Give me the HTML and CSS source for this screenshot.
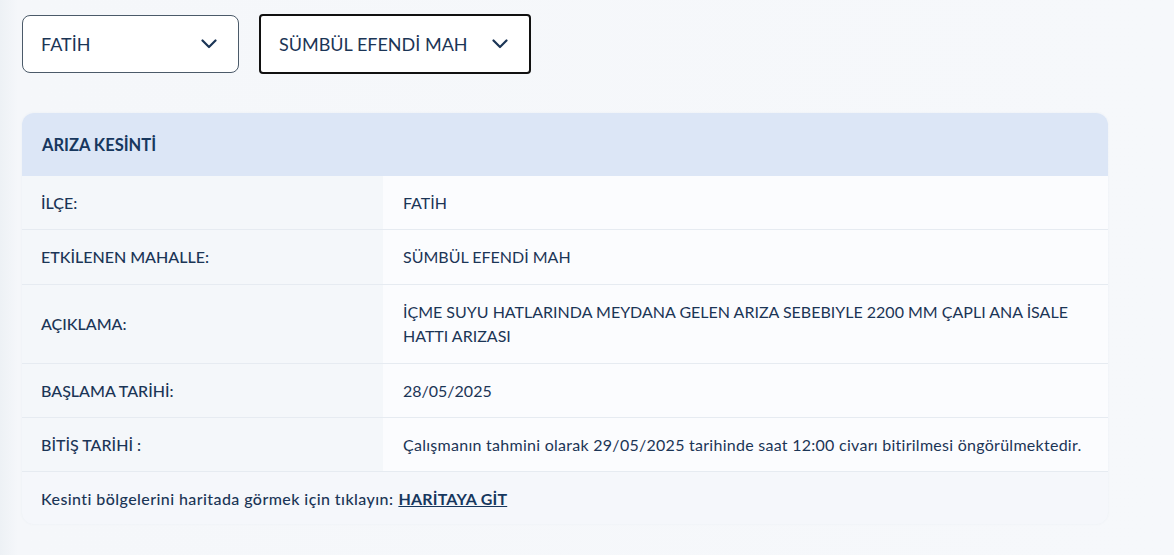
FILE: index.html
```html
<!DOCTYPE html>
<html lang="tr">
<head>
  <meta charset="UTF-8" />
  <title>Arıza Kesinti</title>
  <link rel="stylesheet" href="styles.css">
</head>
<body>

<div class="filters">
  <div class="select">
    <span>FATİH</span>
    <svg class="chevron" viewBox="0 0 16 10" width="16" height="10"><path d="M1.5 1.5 8 8l6.5-6.5" fill="none" stroke="#1b3556" stroke-width="2.2" stroke-linecap="round" stroke-linejoin="round"/></svg>
  </div>
  <div class="select active">
    <span>SÜMBÜL EFENDİ MAH</span>
    <svg class="chevron" viewBox="0 0 16 10" width="16" height="10"><path d="M1.5 1.5 8 8l6.5-6.5" fill="none" stroke="#1b3556" stroke-width="2.2" stroke-linecap="round" stroke-linejoin="round"/></svg>
  </div>
</div>

<div class="card">
  <div class="card-head">ARIZA KESİNTİ</div>
  <table>
    <tr><th>İLÇE:</th><td>FATİH</td></tr>
    <tr class="mid"><th>ETKİLENEN MAHALLE:</th><td>SÜMBÜL EFENDİ MAH</td></tr>
    <tr class="tall"><th>AÇIKLAMA:</th><td>İÇME SUYU HATLARINDA MEYDANA GELEN ARIZA SEBEBIYLE 2200 MM ÇAPLI ANA İSALE HATTI ARIZASI</td></tr>
    <tr><th>BAŞLAMA TARİHİ:</th><td>28/05/2025</td></tr>
    <tr><th>BİTİŞ TARİHİ :</th><td class="sentence">Çalışmanın tahmini olarak 29/05/2025 tarihinde saat 12:00 civarı bitirilmesi öngörülmektedir.</td></tr>
  </table>
  <div class="card-foot"><span class="sentence wide">Kesinti bölgelerini haritada görmek için tıklayın:</span> <a href="#">HARİTAYA GİT</a></div>
</div>

</body>
</html>
```

FILE: styles.css
```css
body {
  margin: 0;
  padding: 15px 0 0 22px;
  font-family: Lato, "Open Sans", sans-serif;
  color: #1b3556;
  background: linear-gradient(to right, #edf1f5 0, #f5f7fa 18px, #f6f8fb 100%);
  height: 540px;
}
.filters {
  display: flex;
  align-items: flex-start;
  gap: 20px;
}
.select {
  box-sizing: border-box;
  width: 217px;
  height: 58px;
  padding: 0 21px 0 18px;
  border: 1px solid #4b5a69;
  border-radius: 8px;
  background: #fff;
  display: flex;
  align-items: center;
  justify-content: space-between;
  font-size: 18px;
}
.select.active {
  width: 272px;
  height: 60px;
  margin-top: -1px;
  border: 2px solid #111;
  border-radius: 4px;
  padding: 0 21px 0 18px;
}
.chevron {
  display: block;
}
.card {
  width: 1086px;
  margin-top: 39px;
  border-radius: 12px;
  overflow: hidden;
  background: #f5f7fb;
  box-shadow: 0 0 3px rgba(40, 70, 110, 0.05);
}
.card-head {
  height: 63px;
  padding-left: 20px;
  display: flex;
  align-items: center;
  background: #dce6f6;
  font-size: 16.5px;
  font-weight: 700;
  color: #17375e;
}
table {
  width: 100%;
  border-collapse: collapse;
}
th, td {
  height: 53px;
  padding: 0 20px;
  border-bottom: 1px solid #e6ebf1;
  text-align: left;
  font-size: 16px;
  line-height: 24px;
}
th {
  width: 322px;
  padding-left: 19px;
  background: #f4f7fa;
  font-weight: 500;
}
td {
  background: #fbfcfe;
  font-weight: 400;
}
tr.mid th, tr.mid td {
  height: 54px;
}
tr.tall th, tr.tall td {
  height: 78px;
}
.sentence {
  letter-spacing: 0.27px;
}
.sentence.wide {
  letter-spacing: 0.42px;
}
.card-foot {
  height: 52px;
  padding-left: 19px;
  display: flex;
  align-items: center;
  gap: 5px;
  font-size: 16px;
  font-weight: 500;
}
.card-foot a {
  color: #17375e;
  font-weight: 700;
  letter-spacing: 0.2px;
}
```
